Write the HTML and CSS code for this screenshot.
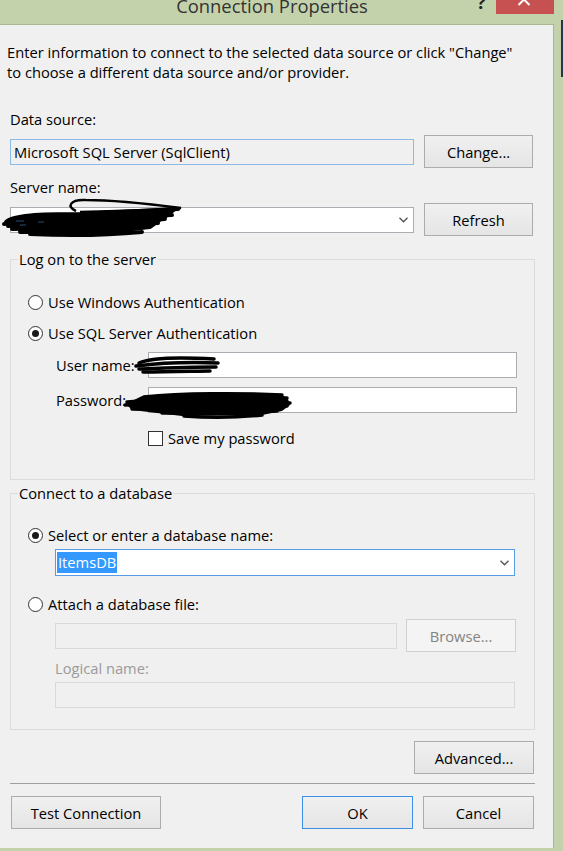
FILE: index.html
```html
<!DOCTYPE html>
<html>
<head>
<meta charset="utf-8">
<link rel="stylesheet" href="styles.css">
</head>
<body>
<div class="window">
  <div class="titlebar">
    <div class="title">Connection Properties</div>
    <div class="help">?</div>
    <div class="close"><svg width="58" height="14" viewBox="0 0 58 14"><path d="M22.5,-6 L33.5,5 M33.5,-6 L22.5,5" stroke="#fff" stroke-width="2"/></svg></div>
  </div>
  <div class="main">
    <div class="content">
      <p class="intro">Enter information to connect to the selected data source or click "Change"<br>to choose a different data source and/or provider.</p>
      <div class="label first">Data source:</div>
      <div class="row">
        <div class="textbox ds">Microsoft SQL Server (SqlClient)</div>
        <button class="btn side">Change...</button>
      </div>
      <div class="label second">Server name:</div>
      <div class="row scribbled">
        <div class="combo server"><span class="val"></span><svg class="chev" width="9" height="6" viewBox="0 0 9 6"><path d="M0.5,0.8 L4.5,4.8 L8.5,0.8" fill="none" stroke="#555" stroke-width="1.4"/></svg></div>
        <button class="btn side">Refresh</button>
        <svg class="scribble s-server" width="200" height="50" viewBox="0 0 200 50">
          <path d="M76,16 C66,12 70,4 86,5 C112,5 150,9 181,13 C160,15 120,16 80,17" fill="none" stroke="#000" stroke-width="2.5"/>
          <path d="M5,28 C10,20 60,19 120,18 L179,13 L168,22 L160,27 L152,33 L120,38 L40,40 L12,34 Z" fill="#000"/>
          <g fill="none" stroke="#000" stroke-width="4" stroke-linecap="round">
            <path d="M6,27 C12,20 40,19 80,19 L178,14"/>
            <path d="M4,29 C40,25 110,22 172,20"/>
            <path d="M8,31 C50,29 120,27 165,24"/>
            <path d="M12,34 C60,33 110,31 158,28"/>
            <path d="M20,37 C70,37 120,35 150,32"/>
            <path d="M30,39 C70,41 110,40 142,37"/>
          </g>
          <g stroke="#3a6fb0" stroke-width="1" opacity="0.7">
            <path d="M16,26 L24,26 M38,27 L44,27 M20,30 L26,30"/>
          </g>
        </svg>
      </div>

      <fieldset class="group g1">
        <legend>Log on to the server</legend>
        <div class="radio r1"><span class="rb"></span>Use Windows Authentication</div>
        <div class="radio r2"><span class="rb on"></span>Use SQL Server Authentication</div>
        <div class="field f-user">
          <span>User name:</span>
          <div class="textbox white"></div>
          <svg class="scribble s-user" width="100" height="30" viewBox="0 0 100 30">
            <g fill="none" stroke="#000" stroke-width="3.5" stroke-linecap="round">
              <path d="M9,13 C20,8 50,7 84,9"/>
              <path d="M6,16 C30,13 60,12 88,13"/>
              <path d="M9,19 C35,18 60,17 86,17"/>
              <path d="M13,22 C40,22 70,21 80,21"/>
            </g>
          </svg>
        </div>
        <div class="field f-pass">
          <span>Password:</span>
          <div class="textbox white"></div>
          <svg class="scribble s-pass" width="180" height="40" viewBox="0 0 180 40">
            <path d="M20,11 C60,8 120,8 160,10 L166,14 L168,20 L160,26 L140,30 L60,31 L10,25 L4,19 Z" fill="#000"/>
            <g fill="none" stroke="#000" stroke-width="3.5" stroke-linecap="round">
              <path d="M22,12 C60,8 120,8 160,10"/>
              <path d="M5,17 C50,14 110,13 165,13"/>
              <path d="M3,20 C60,18 120,17 168,18"/>
              <path d="M10,24 C60,23 120,22 165,21"/>
              <path d="M40,28 C80,28 120,27 155,26"/>
              <path d="M62,31 C90,33 120,32 140,30"/>
            </g>
          </svg>
        </div>
        <div class="check"><span class="cb"></span>Save my password</div>
      </fieldset>

      <fieldset class="group g2">
        <legend>Connect to a database</legend>
        <div class="radio r3"><span class="rb on"></span>Select or enter a database name:</div>
        <div class="combo db"><span class="val"><span class="sel">ItemsDB</span></span><svg class="chev" width="9" height="6" viewBox="0 0 9 6"><path d="M0.5,0.8 L4.5,4.8 L8.5,0.8" fill="none" stroke="#555" stroke-width="1.4"/></svg></div>
        <div class="radio r4"><span class="rb"></span>Attach a database file:</div>
        <div class="filerow">
          <div class="textbox disabled file"></div>
          <button class="btn browse" disabled>Browse...</button>
        </div>
        <div class="dlabel">Logical name:</div>
        <div class="textbox disabled logical"></div>
      </fieldset>

      <div class="adv-row"><button class="btn adv">Advanced...</button></div>
      <div class="sep"></div>
      <div class="bottom-row">
        <button class="btn test">Test Connection</button>
        <div class="spacer"></div>
        <button class="btn ok">OK</button>
        <button class="btn cancel">Cancel</button>
      </div>
    </div>
    <div class="edge">
      <div class="behind"></div>
    </div>
  </div>
</div>
</body>
</html>
```

FILE: styles.css
```css
* { box-sizing: border-box; }
html, body { margin: 0; padding: 0; }
body {
  background: #c4d2ab;
  font-family: "Open Sans", "Noto Sans", sans-serif;
  font-size: 14.7px;
  color: #000;
}
.window {
  width: 563px;
  height: 851px;
  display: flex;
  flex-direction: column;
  overflow: hidden;
  background: #c4d2ab;
}
.titlebar {
  height: 24px;
  flex: none;
  position: relative;
  overflow: hidden;
}
.title {
  width: 544px;
  text-align: center;
  font-size: 18.4px;
  line-height: 24px;
  margin-top: -6px;
  color: #333;
}
.help {
  position: absolute;
  left: 477px;
  top: -8px;
  font-size: 18px;
  font-weight: bold;
  line-height: 20px;
  color: #222;
}
.close {
  position: absolute;
  left: 496px;
  top: 0;
  width: 58px;
  height: 14px;
  background: #c75050;
}
.close svg { display: block; }

.main {
  display: flex;
  flex: none;
  height: 824px;
}
.content {
  width: 554px;
  height: 824px;
  background: #f0f0f0;
  border-top: 1px solid #a9b795;
  border-right: 1px solid #a9b795;
  padding-left: 10px;
  flex: none;
}
.edge {
  flex: 1;
  display: flex;
  justify-content: flex-end;
}
.behind {
  width: 2px;
  height: 57px;
  margin-top: -4px;
  background: #25364a;
}

.intro {
  margin: 17px 0 0 -3px;
  line-height: 20px;
}
.label { line-height: 20px; }
.label.first { margin-top: 27px; }
.label.second { margin-top: 9px; }

.row {
  display: flex;
  align-items: center;
  height: 33px;
  margin-top: 6px;
  gap: 10px;
  position: relative;
}
.textbox {
  height: 26px;
  border: 1px solid #abadb3;
  background: #fff;
  line-height: 24px;
  padding-left: 3px;
}
.textbox.ds {
  width: 404px;
  background: #f0f0f0;
  border-color: #8fb9e6;
}
.btn {
  height: 33px;
  border: 1px solid #acacac;
  background: linear-gradient(#f0f0f0, #e5e5e5);
  font-family: inherit;
  font-size: 14.7px;
  color: #000;
  padding: 0;
  margin: 0;
}
.btn.side { width: 109px; }

.combo {
  display: flex;
  align-items: center;
  height: 26px;
  border: 1px solid #abadb3;
  background: #fff;
}
.combo .val { flex: 1; }
.combo .chev { margin-right: 5px; }
.combo.server { width: 404px; }

.scribble { position: absolute; pointer-events: none; }
.s-server { left: -10px; top: -8px; }

.group {
  margin: 13px 0 0 0;
  padding: 0;
  width: 525px;
  border: 1px solid #dcdcdc;
  min-inline-size: 0;
}
.group legend {
  margin-left: 7px;
  padding: 0 1px;
  line-height: 20px;
}
.g1 { padding-bottom: 31px; }
.g2 { margin-top: 3px; padding-bottom: 21px; }

.radio {
  display: flex;
  align-items: center;
  height: 20px;
  padding-left: 17px;
}
.rb {
  width: 15px;
  height: 15px;
  border: 1px solid #333;
  border-radius: 50%;
  background: #fff;
  margin-right: 5px;
  display: flex;
  align-items: center;
  justify-content: center;
  flex: none;
}
.rb.on::after {
  content: "";
  width: 7px;
  height: 7px;
  border-radius: 50%;
  background: #1a1a1a;
}
.r1 { margin-top: 23px; }
.r2 { margin-top: 11px; }
.r3 { margin-top: 22px; }
.r4 { margin-top: 18px; }

.field {
  display: grid;
  grid-template-columns: 92px 369px;
  align-items: center;
  padding-left: 45px;
  margin-top: 9px;
  position: relative;
  height: 26px;
}
.textbox.white { width: 369px; }
.s-user { left: 119px; top: -2px; }
.s-pass { left: 111px; top: -2px; }

.check {
  display: flex;
  align-items: center;
  height: 20px;
  margin-top: 15px;
  padding-left: 137px;
}
.cb {
  width: 15px;
  height: 15px;
  border: 1px solid #333;
  background: #fff;
  margin-right: 5px;
  flex: none;
}

.combo.db {
  width: 460px;
  height: 27px;
  margin: 4px 0 0 44px;
  border-color: #569de5;
  padding-left: 1px;
}
.sel {
  display: inline-block;
  background: #3399ff;
  color: #fff;
  line-height: 21px;
  padding: 0 1px;
}

.filerow {
  display: flex;
  align-items: center;
  gap: 9px;
  height: 33px;
  margin: 5px 0 0 44px;
}
.textbox.disabled {
  background: #f0f0f0;
  border-color: #d9d9d9;
}
.textbox.file { width: 342px; }
.btn.browse {
  width: 110px;
  background: #f4f4f4;
  border-color: #d0d0d0;
  color: #838383;
}
.dlabel {
  margin: 6px 0 0 44px;
  line-height: 20px;
  color: #9a9a9a;
}
.textbox.logical {
  width: 460px;
  margin: 4px 0 0 44px;
}

.adv-row {
  display: flex;
  justify-content: flex-end;
  width: 524px;
  margin-top: 11px;
}
.btn.adv { width: 120px; }
.sep {
  width: 525px;
  height: 1px;
  background: #a0a0a0;
  margin-top: 9px;
}
.bottom-row {
  display: flex;
  width: 524px;
  margin-top: 12px;
  gap: 10px;
}
.bottom-row .spacer { flex: 1; }
.btn.test { width: 150px; margin-left: 1px; }
.btn.ok { width: 111px; border-color: #3c8ee6; }
.btn.cancel { width: 111px; }
```
